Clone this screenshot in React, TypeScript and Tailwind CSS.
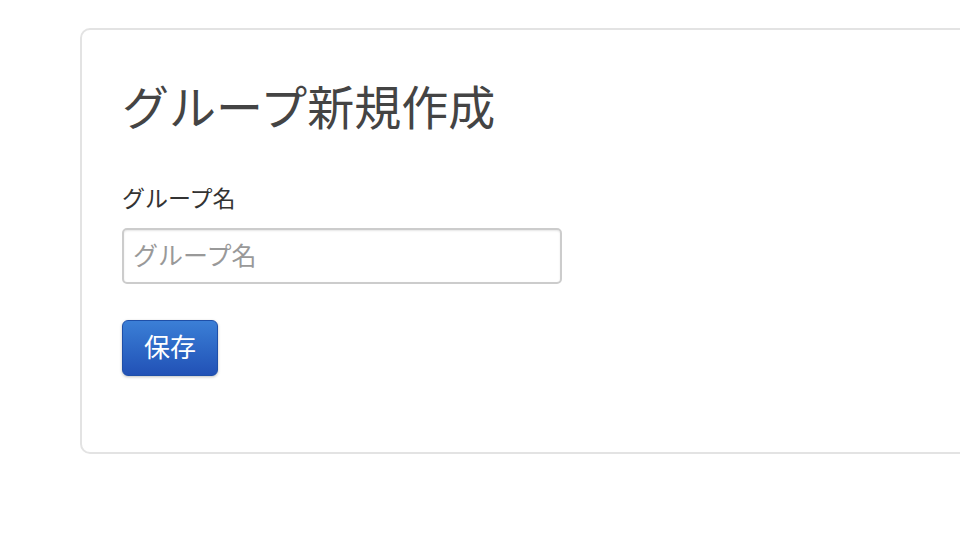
export default function App() {
  const font = { fontFamily: '"Noto Sans CJK JP", "Noto Sans", sans-serif' };
  return (
    <div className="w-[960px] h-[556px] overflow-hidden bg-white" style={font}>
      <div className="pt-[28px] pl-[80px]">
        <div className="w-[1000px] h-[426px] border-2 border-[#e3e3e3] rounded-[10px] pl-[40px] pt-[40px]">
          <h1 className="text-[47px] leading-[70px] text-[#444] font-normal m-0">グループ新規作成</h1>
          <div className="mt-[42px]">
            <label className="block text-[23px] leading-[30px] text-[#333]">グループ名</label>
            <input
              className="mt-[16px] block w-[440px] h-[56px] border-2 border-[#ccc] rounded-[5px] px-[9px] pb-[4px] text-[25px] text-[#333] placeholder:text-[#999] shadow-[inset_0_1px_2px_rgba(0,0,0,0.1)] outline-none"
              placeholder="グループ名"
              style={font}
            />
          </div>
          <button
            className="mt-[36px] block w-[96px] h-[56px] pb-[5px] rounded-[6px] border border-[#1e4fa8] bg-gradient-to-b from-[#3b7fd6] to-[#2251b6] text-white text-[26px] shadow-[0_1px_3px_rgba(0,0,0,0.25)]"
            style={font}
          >
            保存
          </button>
        </div>
      </div>
    </div>
  );
}
